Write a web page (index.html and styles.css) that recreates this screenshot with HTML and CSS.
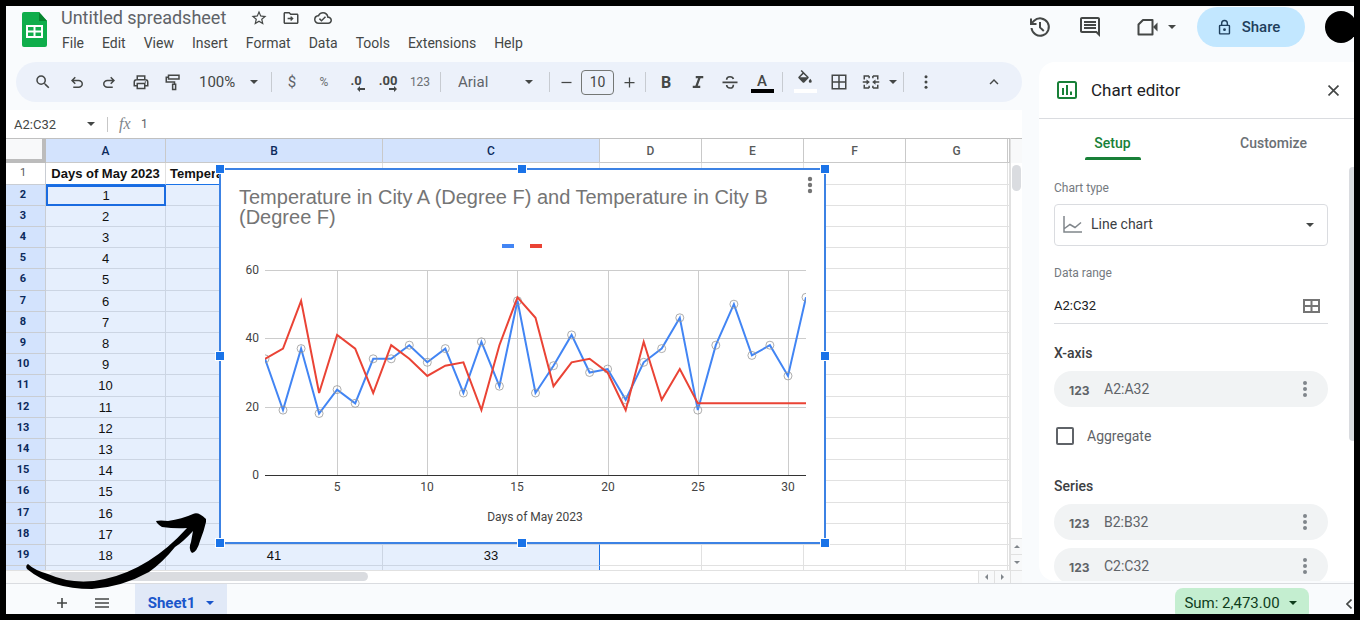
FILE: index.html
```html
<!DOCTYPE html>
<html lang="en">
<head>
<meta charset="utf-8">
<title>Untitled spreadsheet</title>
<link rel="stylesheet" href="styles.css">
</head>
<body>
<div class="app">
  <header class="header">
    <svg class="logo" viewBox="0 0 25 35" aria-hidden="true"><path fill="#0fad4b" d="M2 0h15l8 9v24a2 2 0 0 1-2 2H2a2 2 0 0 1-2-2V2a2 2 0 0 1 2-2z"/><path fill="#07852f" d="M17 0l8 9h-8z"/><path fill="#fff" fill-rule="evenodd" d="M4 13h17v13H4zM6 15v3.500h5.500v-3.500zM13.500 15v3.500H19v-3.500zM6 20.500V24h5.500v-3.500zM13.500 20.500V24H19v-3.500z"/></svg>
    <div class="doc">
      <div class="doc-title">
        <h1>Untitled spreadsheet</h1>
        <button class="mini" aria-label="Star"><svg viewBox="0 0 24 24"><path d="M22 9.240l-7.190-.62L12 2 9.190 8.630 2 9.240l5.460 4.730L5.820 21 12 17.270 18.180 21l-1.630-7.030L22 9.240zM12 15.400l-3.760 2.270 1-4.280-3.320-2.880 4.380-.38L12 6.100l1.710 4.040 4.380.38-3.320 2.880 1 4.280L12 15.400z"/></svg></button>
        <button class="mini" aria-label="Move"><svg viewBox="0 0 24 24"><path d="M20 6h-8l-2-2H4c-1.100 0-2 .9-2 2v12c0 1.100.9 2 2 2h16c1.100 0 2-.9 2-2V8c0-1.100-.9-2-2-2zm0 12H4V6h5.200l2 2H20v10zM12.200 16l-1.300-1.300 1-1H7.500v-1.900h4.400l-1-1L12.200 9.500l3.300 3.250z"/></svg></button>
        <button class="mini" aria-label="Saved to cloud"><svg viewBox="0 0 24 24"><path d="M19.350 10.040A7.490 7.490 0 0 0 12 4C9.110 4 6.600 5.640 5.350 8.040A5.994 5.994 0 0 0 0 14c0 3.310 2.690 6 6 6h13c2.760 0 5-2.240 5-5 0-2.640-2.050-4.780-4.650-4.960zM19 18H6c-2.210 0-4-1.790-4-4 0-2.050 1.530-3.760 3.560-3.970l1.070-.11.5-.95A5.469 5.469 0 0 1 12 6c2.620 0 4.880 1.860 5.390 4.430l.3 1.500 1.530.11A2.980 2.980 0 0 1 22 15c0 1.650-1.350 3-3 3zm-9-3.820l-2.090-2.090L6.500 13.500 10 17l6.010-6.010-1.410-1.410z"/></svg></button>
      </div>
      <nav class="menus">
        <button>File</button><button>Edit</button><button>View</button><button>Insert</button><button>Format</button><button>Data</button><button>Tools</button><button>Extensions</button><button>Help</button>
      </nav>
    </div>
    <div class="actions">
      <button class="action" aria-label="Version history"><svg viewBox="0 0 24 24"><path fill="none" stroke="currentColor" stroke-width="2" d="M3.500 13a8.700 8.700 0 1 0 2.600-7.200L3.500 8.400M3 3.500V9h5.500M12 7v5.400l3.800 3.600"/></svg></button>
      <button class="action" aria-label="Comments"><svg viewBox="0 0 24 24"><path d="M22 4c0-1.100-.9-2-2-2H4c-1.100 0-2 .9-2 2v12c0 1.100.9 2 2 2h14l4 4V4zm-2 13.200L18.800 16H4V4h16v13.200zM6 12h12v2H6zm0-3h12v2H6zm0-3h12v2H6z"/></svg></button>
      <button class="action meet" aria-label="Join a call"><svg viewBox="0 0 22 18"><path fill="none" stroke="currentColor" stroke-width="2" stroke-linejoin="round" d="M6 2h9.500v14.500H1.500V6.500z"/><path d="M16 9l4.500-4.500v9z"/></svg><i class="caret"></i></button>
      <button class="share"><svg viewBox="0 0 24 24"><path d="M18 8h-1V6A5 5 0 0 0 7 6v2H6a2 2 0 0 0-2 2v10c0 1.100.9 2 2 2h12a2 2 0 0 0 2-2V10a2 2 0 0 0-2-2zM9 6a3 3 0 0 1 6 0v2H9zm9 14H6V10h12zm-6-3a2 2 0 1 0 0-4 2 2 0 0 0 0 4z"/></svg>Share</button>
      <button class="avatar" aria-label="Account"></button>
    </div>
  </header>

  <div class="workspace">
    <main class="main">
      <div class="toolbar">
        <button class="tool wide" aria-label="Search"><svg viewBox="0 0 24 24"><path d="M15.500 14h-.79l-.28-.27A6.471 6.471 0 0 0 16 9.500 6.500 6.500 0 1 0 9.500 16c1.610 0 3.090-.59 4.230-1.570l.27.28v.79l5 4.990L20.490 19l-4.990-5zm-6 0C7.010 14 5 11.990 5 9.500S7.010 5 9.500 5 14 7.010 14 9.500 11.990 14 9.500 14z"/></svg></button>
        <button class="tool" aria-label="Undo"><svg viewBox="0 0 24 24"><path d="M7 20v-2h7.100q1.600 0 2.750-1T18 14.500q0-1.500-1.150-2.500T14.100 11H7.800l2.600 2.600L9 15l-5-5 5-5 1.400 1.400L7.800 9h6.300q2.400 0 4.150 1.600T20 14.500q0 2.350-1.750 3.900T14.100 20z"/></svg></button>
        <button class="tool" aria-label="Redo"><svg viewBox="0 0 24 24"><path d="M17 20v-2H9.900q-1.600 0-2.750-1T6 14.500q0-1.500 1.150-2.500T9.900 11h6.300l-2.600 2.600L15 15l5-5-5-5-1.400 1.400L16.200 9H9.900q-2.400 0-4.150 1.600T4 14.500q0 2.350 1.750 3.900T9.900 20z"/></svg></button>
        <button class="tool" aria-label="Print"><svg viewBox="0 0 24 24"><path fill="none" stroke="currentColor" stroke-width="2" d="M7 9V4h10v5M7 17H3v-5q0-3 3-3h12q3 0 3 3v5h-4M7 14h10v6.500H7z"/><circle cx="17.800" cy="12" r="1"/></svg></button>
        <button class="tool" aria-label="Paint format"><svg viewBox="0 0 24 24"><path fill="none" stroke="currentColor" stroke-width="2" d="M6 3h14v5H6zM6 5.500H3V12h11v3M11.500 15h4v7h-4z"/></svg></button>
        <label class="dropdown zoom"><select aria-label="Zoom"><option>100%</option></select></label>
        <span class="sep"></span>
        <button class="tool currency">$</button>
        <button class="tool small">%</button>
        <button class="tool dec" aria-label="Decrease decimal places">.0<svg viewBox="0 0 8 6"><path d="M3 0v2h5v2H3v2L0 3z"/></svg></button>
        <button class="tool dec" aria-label="Increase decimal places">.00<svg viewBox="0 0 8 6"><path d="M5 0v2H0v2h5v2l3-3z"/></svg></button>
        <button class="tool small">123</button>
        <span class="sep"></span>
        <label class="dropdown font"><select aria-label="Font"><option>Arial</option></select></label>
        <span class="sep"></span>
        <button class="tool narrow" aria-label="Decrease font size"><svg viewBox="0 0 24 24"><path d="M4 11h16v2H4z"/></svg></button>
        <input class="size" value="10" aria-label="Font size">
        <button class="tool narrow" aria-label="Increase font size"><svg viewBox="0 0 24 24"><path d="M4 11h7V4h2v7h7v2h-7v7h-2v-7H4z"/></svg></button>
        <span class="sep"></span>
        <button class="tool bold">B</button>
        <button class="tool" aria-label="Italic"><svg viewBox="0 0 24 24"><path d="M9 4v3h3.200l-3.700 10H5v3h10v-3h-3.300l3.700-10H19V4z"/></svg></button>
        <button class="tool" aria-label="Strikethrough"><svg viewBox="0 0 24 24"><path fill="none" stroke="currentColor" stroke-width="2.200" d="M2 12.500h20M7.500 9q0-4 4.500-4 4 0 4.500 3M7.500 16q.5 4 4.500 4 4.500 0 4.500-4.500"/></svg></button>
        <button class="tool color">A</button>
        <span class="sep"></span>
        <button class="tool wide fill" aria-label="Fill colour"><svg viewBox="0 0 24 24"><path fill-rule="evenodd" d="M16.560 8.940L7.620 0 6.210 1.410l2.380 2.380-5.150 5.150a1.500 1.500 0 0 0 0 2.120l5.500 5.500a1.490 1.490 0 0 0 2.120 0l5.500-5.500a1.500 1.500 0 0 0 0-2.120zM5.500 9.800L10 5.210l4.600 4.600zM19 11.500s-2 2.170-2 3.500a2 2 0 0 0 4 0c0-1.330-2-3.500-2-3.500z"/></svg></button>
        <button class="tool" aria-label="Borders"><svg viewBox="0 0 24 24"><path fill="none" stroke="currentColor" stroke-width="2" d="M3 3h18v18H3zM12 3v18M3 12h18"/></svg></button>
        <button class="tool" aria-label="Merge cells"><svg viewBox="0 0 24 24"><path fill="none" stroke="currentColor" stroke-width="2" d="M9.500 4H3v4.500M3 15.500V20h6.500M14.500 4H21v4.500M21 15.500V20h-6.500M9.500 4v3M14.500 4v3M9.500 20v-3M14.500 20v-3M1 12h6M23 12h-6"/><path d="M6 8.500v7l4.500-3.500zM18 8.500v7L13.500 12z"/></svg></button>
        <button class="tool tiny" aria-label="Merge type"><i class="caret"></i></button>
        <span class="sep"></span>
        <button class="tool wide" aria-label="More"><svg viewBox="0 0 24 24"><circle cx="12" cy="5" r="2"/><circle cx="12" cy="12" r="2"/><circle cx="12" cy="19" r="2"/></svg></button>
        <button class="tool collapse" aria-label="Hide the menus"><svg viewBox="0 0 24 24"><path d="M12 8l-6 6 1.410 1.410L12 10.830l4.590 4.580L18 14z"/></svg></button>
      </div>

      <div class="formula">
        <label class="dropdown range"><select aria-label="Name box"><option>A2:C32</option></select></label>
        <span class="fx">fx</span>
        <input class="formula-input" value="1" aria-label="Formula">
      </div>

      <div class="sheet">
        <div class="cells">
          <table class="grid">
            <colgroup><col class="c-num"><col class="c-a"><col class="c-wide"><col class="c-wide"><col class="c-std"><col class="c-std"><col class="c-std"><col class="c-std"><col></colgroup>
            <thead><tr><th class="corner"></th><th class="sel">A</th><th class="sel">B</th><th class="sel">C</th><th>D</th><th>E</th><th>F</th><th>G</th><th></th></tr></thead>
            <tbody id="rows"></tbody>
          </table>
          <figure class="chart">
            <figcaption>Temperature in City A (Degree F) and Temperature in City B (Degree F)</figcaption>
            <svg class="plot" id="plot" viewBox="0 0 603 315" role="img" aria-label="Line chart of temperature per day"></svg>
            <button class="chart-menu" aria-label="Chart options"><svg viewBox="0 0 6 18"><circle cx="3" cy="3" r="2.200"/><circle cx="3" cy="9" r="2.200"/><circle cx="3" cy="15" r="2.200"/></svg></button>
            <i class="handle top left"></i><i class="handle top center"></i><i class="handle top right"></i>
            <i class="handle middle left"></i><i class="handle middle right"></i>
            <i class="handle bottom left"></i><i class="handle bottom center"></i><i class="handle bottom right"></i>
          </figure>
        </div>
        <div class="vscroll">
          <div class="vtrack"><div class="vthumb"></div></div>
          <button aria-label="Scroll up"><i class="tri up"></i></button>
          <button aria-label="Scroll down"><i class="tri down"></i></button>
        </div>
      </div>
      <div class="hscroll">
        <div class="htrack"><div class="hthumb"></div></div>
        <button aria-label="Scroll left"><i class="tri west"></i></button>
        <button aria-label="Scroll right"><i class="tri east"></i></button>
        <span class="hcorner"></span>
      </div>
    </main>

    <aside class="panel">
      <div class="panel-head">
        <svg viewBox="0 0 20 18"><path fill="none" stroke="currentColor" stroke-width="2" d="M2.500 1h15A1.500 1.500 0 0 1 19 2.500v13a1.500 1.500 0 0 1-1.500 1.500h-15A1.500 1.500 0 0 1 1 15.500v-13A1.500 1.500 0 0 1 2.500 1z"/><path d="M5 7h2v7H5zM9 4h2v10H9zM13 10.500h2V14h-2z"/></svg>
        <h2>Chart editor</h2>
        <button aria-label="Close"><svg viewBox="0 0 10 10"><path fill="none" stroke="currentColor" stroke-width="1.500" d="M.5.5l9 9M9.500.5l-9 9"/></svg></button>
      </div>
      <div class="tabs"><button class="tab active">Setup</button><button class="tab">Customize</button></div>
      <div class="panel-scroll">
        <div class="form">
          <label class="caption" for="type">Chart type</label>
          <div class="dropdown type">
            <svg viewBox="0 0 19 17"><path fill="none" stroke="currentColor" stroke-width="1.500" d="M1 0v16h18M1.500 12.500L7 8.500l5 3 6-5"/></svg>
            <select id="type"><option>Line chart</option></select>
          </div>
          <label class="caption" for="range">Data range</label>
          <div class="range-row">
            <input id="range" value="A2:C32">
            <button aria-label="Select a data range"><svg viewBox="0 0 17 14"><path fill="none" stroke="currentColor" stroke-width="2" d="M1 1h15v12H1zM8.500 1v12M1 7h15"/></svg></button>
          </div>
          <h3>X-axis</h3>
          <div class="chip"><b>123</b><span>A2:A32</span><button aria-label="Options"><svg viewBox="0 0 6 18"><circle cx="3" cy="3" r="2"/><circle cx="3" cy="9" r="2"/><circle cx="3" cy="15" r="2"/></svg></button></div>
          <label class="check"><input type="checkbox">Aggregate</label>
          <h3>Series</h3>
          <div class="chip"><b>123</b><span>B2:B32</span><button aria-label="Options"><svg viewBox="0 0 6 18"><circle cx="3" cy="3" r="2"/><circle cx="3" cy="9" r="2"/><circle cx="3" cy="15" r="2"/></svg></button></div>
          <div class="chip"><b>123</b><span>C2:C32</span><button aria-label="Options"><svg viewBox="0 0 6 18"><circle cx="3" cy="3" r="2"/><circle cx="3" cy="9" r="2"/><circle cx="3" cy="15" r="2"/></svg></button></div>
        </div>
        <div class="panel-thumb"></div>
      </div>
    </aside>
  </div>

  <footer class="footer">
    <button class="foot" aria-label="Add sheet"><svg viewBox="0 0 12 12"><path fill="none" stroke="currentColor" stroke-width="1.600" d="M6 1v10M1 6h10"/></svg></button>
    <button class="foot" aria-label="All sheets"><svg viewBox="0 0 14 12"><path fill="none" stroke="currentColor" stroke-width="1.500" d="M0 2h14M0 6h14M0 10h14"/></svg></button>
    <button class="sheet-tab">Sheet1<i class="caret"></i></button>
    <button class="sum">Sum: 2,473.00<i class="caret"></i></button>
    <button class="side" aria-label="Show side panel"><svg viewBox="0 0 6 10"><path fill="none" stroke="currentColor" stroke-width="1.600" d="M5.500.5L1 5l4.500 4.500"/></svg></button>
  </footer>

  <svg class="arrow" viewBox="20 508 190 85" aria-hidden="true"><path d="M28 564Q34 570 48 574Q75 586 105 579Q150 569 187 528Q176 529 162 527Q157 524 156 521Q160 520 168 521Q182 519 193 514Q198 511 206 519V522Q204 531 200 541Q197 552 192 553Q188 549 191 542L193 531Q183 542 175 547Q163 562 149 572Q122 587 92 589Q51 589 27 569Q25 566 28 564z"/></svg>
</div>
<script src="app.js"></script>
</body>
</html>
```

FILE: styles.css
```css
* { box-sizing: border-box; }
body { margin: 0; background: #000; font-family: Roboto, "Liberation Sans", sans-serif; color: #444746; }
button, select, input { font: inherit; color: inherit; }
button { border: 0; padding: 0; background: none; }
select { appearance: none; border: 0; background: none; padding: 0; width: 100%; }
input { border: 0; background: none; padding: 0; min-width: 0; }
svg { fill: currentColor; display: block; flex: none; }
h1, h2, h3, figure { margin: 0; font-weight: 400; }

.app { position: relative; height: 100vh; border: 6px solid #000; background: #f9fbfd; display: flex; flex-direction: column; overflow: hidden; }

.header { display: flex; height: 56px; flex: none; padding-left: 16px; }
.logo { width: 25px; height: 35px; margin-top: 6px; }
.doc { padding-left: 6px; }
.doc-title { display: flex; align-items: center; height: 24px; padding-left: 8px; }
.doc-title h1 { font-size: 18px; line-height: 24px; margin-right: 17px; color: #5f6368; white-space: nowrap; }
.mini { width: 32px; display: grid; place-items: center; }
.mini svg { width: 18px; height: 18px; }
.menus { display: flex; height: 26px; font-size: 14px; }
.menus button { padding: 0 9px; white-space: nowrap; }
.actions { display: flex; align-items: center; height: 42px; margin-left: auto; }
.action { width: 50px; display: flex; justify-content: center; align-items: center; }
.action svg { width: 24px; height: 24px; }
.meet { width: 82px; gap: 9px; }
.action.meet svg { width: 22px; height: 18px; }
.share { display: flex; align-items: center; justify-content: center; gap: 9px; width: 108px; height: 40px; padding-right: 6px; border-radius: 20px; background: #c2e7ff; color: #1f3f5c; font-size: 15px; font-weight: 500; }
.share svg { width: 17px; height: 17px; }
.avatar { width: 32px; height: 32px; border-radius: 50%; background: #000; margin: 0 -3px 0 20px; }
.caret { width: 0; height: 0; border: 4px solid transparent; border-top-color: currentColor; border-bottom: 0; }

.workspace { display: flex; flex: 1; min-height: 0; }
.main { flex: 1; min-width: 0; display: flex; flex-direction: column; }
.toolbar { display: flex; align-items: center; height: 40px; flex: none; margin: 0 0 8px 10px; padding: 0 12px 0 9px; border-radius: 20px; background: #ecf1fa; font-size: 15px; }
.tool { width: 32px; height: 30px; flex: none; display: flex; align-items: center; justify-content: center; }
.tool svg { width: 18px; height: 18px; }
.wide { width: 36px; }
.narrow { width: 24px; }
.narrow svg { width: 15px; height: 15px; }
.tiny { width: 12px; }
.small { font-size: 12px; color: #6b6f73; }
.currency { color: #5f6368; }
.bold { font-weight: 700; font-size: 16px; }
.dec { position: relative; font-size: 13px; font-weight: 700; padding-bottom: 4px; }
.dec svg { position: absolute; right: 7px; bottom: 5px; width: 8px; height: 6px; }
.color, .fill { flex-direction: column; justify-content: flex-end; font-size: 15px; line-height: 16px; font-weight: 500; padding-bottom: 4px; }
.color::after, .fill::after { content: ""; width: 23px; height: 4px; background: #000; }
.fill::after { background: #fff; margin-top: 1px; }
.collapse { margin-left: auto; }
.sep { width: 1px; height: 20px; margin: 0 4px; background: #c7cbd1; flex: none; }
.dropdown { position: relative; flex: none; display: flex; align-items: center; }
.dropdown::after { content: ""; position: absolute; right: 9px; top: calc(50% - 2px); border: 4px solid transparent; border-top-color: #444746; border-bottom: 0; pointer-events: none; }
.zoom { width: 78px; padding-left: 10px; }
.font { width: 100px; padding-left: 13px; color: #5f6368; }
.font::after { right: 12px; }
.size { width: 33px; height: 25px; margin: 0 3px; flex: none; border: 1px solid #747775; border-radius: 4px; text-align: center; font-size: 14px; }

.formula { display: flex; align-items: center; height: 28px; flex: none; background: #fff; font-size: 13px; }
.range { width: 102px; padding-left: 8px; border-right: 1px solid #c7c7c7; }
.range::after { right: 12px; }
.fx { width: 32px; padding-left: 11px; font-family: "Liberation Serif", serif; font-style: italic; font-size: 16px; color: #80868b; }
.formula-input { flex: 1; font-size: 12px; padding-left: 1px; color: #5f6368; }

.sheet { flex: 1; min-height: 0; display: flex; background: #fff; }
.cells { position: relative; flex: 1; min-width: 0; overflow: hidden; border-top: 1px solid #c0c0c0; }
.grid { border-collapse: separate; border-spacing: 0; table-layout: fixed; width: 100%; font-family: "Liberation Sans", Arial, sans-serif; font-size: 13px; color: #111; }
.c-num { width: 40px; }
.c-a { width: 120px; }
.c-wide { width: 217px; }
.c-std { width: 102px; }
.grid th, .grid td { padding: 0; overflow: hidden; white-space: nowrap; text-align: center; border-right: 1px solid #e1e1e1; border-bottom: 1px solid #e1e1e1; }
.grid thead tr { height: 24px; }
.grid tbody tr { height: 21px; }
.grid tbody tr:nth-child(5n+1) { height: 22px; }
.grid thead th { font: 500 12px Roboto, sans-serif; color: #575a5a; border-color: #c9c9c9; }
.grid thead .sel { background: #d3e3fd; color: #0b2a5c; }
.grid thead .corner { background: #f8f9fa; border-right: 4px solid #bcbcbc; border-bottom: 4px solid #bcbcbc; }
.grid tbody th { font: 400 11px Roboto, sans-serif; color: #575a5a; border-color: #c9cdd3; padding: 0 5px 2px 0; }
.grid tbody th.sel { background: #d3e3fd; color: #0b2a5c; font-weight: 700; }
.grid td.title { font-weight: 700; border-bottom-color: #1a73e8; }
.grid td.title.cut { text-align: left; padding-left: 4px; }
.grid td.in { background: #e6effd; border-color: #ccd5e3; }
.grid td.in.last { border-right-color: #1a73e8; }
.grid td.active { border: 2px solid #1a6be0; }

.chart { position: absolute; left: 213px; top: 29px; width: 607px; height: 376px; border: 2px solid #3c82e4; background: #fff; padding: 17px 0 0; }
.chart figcaption { padding: 0 40px 0 18px; font-family: "Liberation Sans", Arial, sans-serif; font-size: 20px; line-height: 20px; color: #757575; }
.plot { width: 603px; height: 315px; font-size: 12px; fill: #444; }
.chart-menu { position: absolute; right: 11px; top: 6px; color: #757575; }
.chart-menu svg { width: 6px; height: 18px; }
.handle { position: absolute; width: 8px; height: 8px; background: #1a73e8; outline: 1px solid #fff; }
.top { top: -5px; }
.middle { top: 182px; }
.bottom { bottom: -5px; }
.left { left: -5px; }
.center { left: 297px; }
.right { right: -5px; }

.vscroll { width: 12px; flex: none; display: flex; flex-direction: column; border-left: 1px solid #e1e1e1; border-top: 1px solid #c0c0c0; }
.vtrack { flex: 1; border-top: 24px solid #f8f9fa; padding: 2px 0 0 1px; }
.vthumb { width: 9px; height: 26px; border-radius: 5px; background: #dadce0; }
.vscroll button { height: 16px; border-top: 1px solid #e1e1e1; background: #f8f9fa; display: grid; place-items: center; }
.hscroll { height: 13px; flex: none; display: flex; background: #fff; border-top: 1px solid #e1e1e1; }
.htrack { flex: 1; padding: 1px 0 0 43px; background: linear-gradient(90deg, #f8f9fa 40px, #fff 40px); }
.hthumb { width: 319px; height: 9px; border-radius: 5px; background: #dadce0; }
.hscroll button { width: 16px; border-left: 1px solid #e1e1e1; background: #f8f9fa; display: grid; place-items: center; }
.hcorner { width: 12px; border-left: 1px solid #e1e1e1; background: #f8f9fa; }
.tri { width: 0; height: 0; border: 3px solid transparent; }
.up { border-bottom-color: #80868b; border-top: 0; }
.down { border-top-color: #80868b; border-bottom: 0; }
.west { border-right-color: #80868b; border-left: 0; }
.east { border-left-color: #80868b; border-right: 0; }

.panel { width: 315px; flex: none; margin: 0 0 2px 17px; background: #fff; border-radius: 16px 0 0 16px; display: flex; flex-direction: column; overflow: hidden; }
.panel-head { height: 57px; flex: none; display: flex; align-items: center; padding: 0 15px 1px 18px; border-bottom: 1px solid #dadce0; color: #188038; }
.panel-head > svg { width: 20px; height: 18px; }
.panel-head h2 { margin-left: 14px; font-size: 17px; color: #202124; }
.panel-head button { margin-left: auto; padding-top: 2px; color: #444746; }
.panel-head button svg { width: 11px; height: 11px; }
.tabs { display: flex; height: 48px; flex: none; padding-top: 11px; }
.tab { flex: 1; display: flex; flex-direction: column; align-items: center; font-size: 14px; line-height: 27px; font-weight: 500; color: #6b7075; padding-right: 7px; }
.active.tab { color: #188038; padding-right: 14px; }
.tab.active::after { content: ""; width: 56px; height: 3px; border-radius: 2px 2px 0 0; background: #188038; }
.panel-scroll { flex: 1; min-height: 0; display: flex; overflow: hidden; }
.form { flex: 1; padding: 13px 21px 0 15px; }
.panel-thumb { width: 5px; height: 274px; border-radius: 4px 0 0 4px; background: #dadce0; }
.caption { display: block; font-size: 12px; line-height: 16px; color: #757a7f; }
.type { height: 42px; margin: 8px 0 19px; padding: 0 9px 2px 8px; border: 1px solid #dadce0; border-radius: 4px; font-size: 14px; gap: 9px; color: #3c4043; }
.type::after { right: 13px; }
.type svg { width: 19px; height: 17px; color: #80868b; }
.range-row { display: flex; align-items: center; height: 36px; margin: 7px 0 20px; border-bottom: 1px solid #dadce0; }
.range-row input { flex: 1; font-size: 13px; color: #202124; }
.range-row button { margin-right: 8px; color: #757575; }
.range-row svg { width: 17px; height: 14px; }
.form h3 { font-size: 14px; line-height: 18px; font-weight: 500; margin-bottom: 9px; color: #3c4043; }
.chip { display: flex; align-items: center; height: 36px; margin-bottom: 8px; padding: 0 20px 0 15px; border-radius: 18px; background: #f1f3f4; font-size: 14px; color: #5f6368; }
.chip b { width: 35px; padding-top: 2px; font: 700 12px Inter, sans-serif; }
.chip button { margin-left: auto; color: #80868b; }
.chip button svg { width: 6px; height: 18px; }
.check { display: flex; align-items: center; gap: 13px; height: 18px; margin: 20px 0 32px; padding-left: 2px; font-size: 14px; color: #5f6368; }
.check input { appearance: none; width: 18px; height: 18px; margin: 0; border: 2px solid #5f6368; border-radius: 2px; }

.footer { display: flex; height: 31px; flex: none; border-top: 1px solid #dadce0; padding-left: 36px; }
.foot { width: 40px; display: grid; place-items: center; padding-top: 8px; }
.foot svg { width: 14px; height: 12px; }
.sheet-tab { display: flex; align-items: center; justify-content: center; gap: 11px; width: 92px; margin-left: 13px; padding-top: 8px; background: #e1e9f7; color: #1a56cb; font-size: 15px; font-weight: 700; }
.sum { display: flex; align-items: center; justify-content: center; gap: 9px; width: 134px; height: 32px; margin: 4px 0 0 auto; padding: 0 3px 3px 0; border-radius: 8px; background: #c4eed0; color: #0f3d1c; font-size: 15px; }
.side { margin-left: 35px; width: 10px; padding-top: 10px; display: grid; place-items: center; }
.side svg { width: 6px; height: 10px; }
.arrow { position: absolute; left: 14px; bottom: 21px; width: 190px; height: 85px; fill: #000; pointer-events: none; }
```

FILE: app.js
```js
const cityA = [34, 19, 37, 18, 25, 21, 34, 34, 38, 33, 37, 24, 39, 26, 51, 24, 32, 41, 30, 31, 22, 33, 37, 46, 19, 38, 50, 35, 38, 29, 52];
const cityB = [34, 37, 51, 24, 41, 37, 24, 38, 34, 29, 32, 33, 19, 38, 52, 46, 26, 33, 34, 30, 19, 39, 22, 31, 21, 21, 21, 21, 21, 21, 21];

// Sheet rows: one heading row, then one row per day. Readings under the chart are left blank.
const firstClear = 18, lastDay = 18;
const rest = '<td></td>'.repeat(5);
const rows = [`<tr><th>1</th><td class="title">Days of May 2023</td><td class="title cut">Temperature</td><td class="title"></td>${rest}</tr>`];
for (let day = 1; day <= lastDay + 1; day++) {
  const open = day >= firstClear && day <= lastDay;
  const shown = day <= lastDay;
  rows.push(`<tr><th class="sel">${shown ? day + 1 : ''}</th><td class="in${day === 1 ? ' active' : ''}">${shown ? day : ''}</td><td class="in">${open ? cityA[day - 1] : ''}</td><td class="in last">${open ? cityB[day - 1] : ''}</td>${rest}</tr>`);
}
document.getElementById('rows').innerHTML = rows.join('');

// Line chart.
const left = 44, right = 585, base = 248, ceiling = 43;
const x = day => left + (day - 1) * (right - left) / 30;
const y = value => base - value * (base - ceiling) / 60;
const line = data => data.map((v, i) => `${x(i + 1).toFixed(1)},${y(v).toFixed(1)}`).join(' ');
let out = '<clipPath id="area"><rect x="44" y="30" width="541" height="220"/></clipPath>';
out += '<rect x="281" y="17" width="12" height="4" fill="#4285f4"/><rect x="309" y="17" width="12" height="4" fill="#ea4335"/>';
for (const v of [0, 20, 40, 60]) {
  out += `<path d="M${left} ${Math.round(y(v)) + 0.5}H${right}" stroke="${v ? '#ccc' : '#333'}"/>`;
  out += `<text x="38" y="${Math.round(y(v)) + 4}" text-anchor="end">${v}</text>`;
}
for (const d of [5, 10, 15, 20, 25, 30]) {
  out += `<path d="M${Math.round(x(d)) + 0.5} ${ceiling}V${base}" stroke="#ccc"/>`;
  out += `<text x="${Math.round(x(d))}" y="264" text-anchor="middle">${d}</text>`;
}
out += '<text x="314" y="294" text-anchor="middle">Days of May 2023</text><g clip-path="url(#area)" fill="none">';
out += `<polyline points="${line(cityA)}" stroke="#4285f4" stroke-width="2"/>`;
out += cityA.map((v, i) => `<circle cx="${x(i + 1).toFixed(1)}" cy="${y(v).toFixed(1)}" r="4" stroke="#999" stroke-opacity=".8"/>`).join('');
out += `<polyline points="${line(cityB)}" stroke="#ea4335" stroke-width="2"/></g>`;
document.getElementById('plot').innerHTML = out;
```
